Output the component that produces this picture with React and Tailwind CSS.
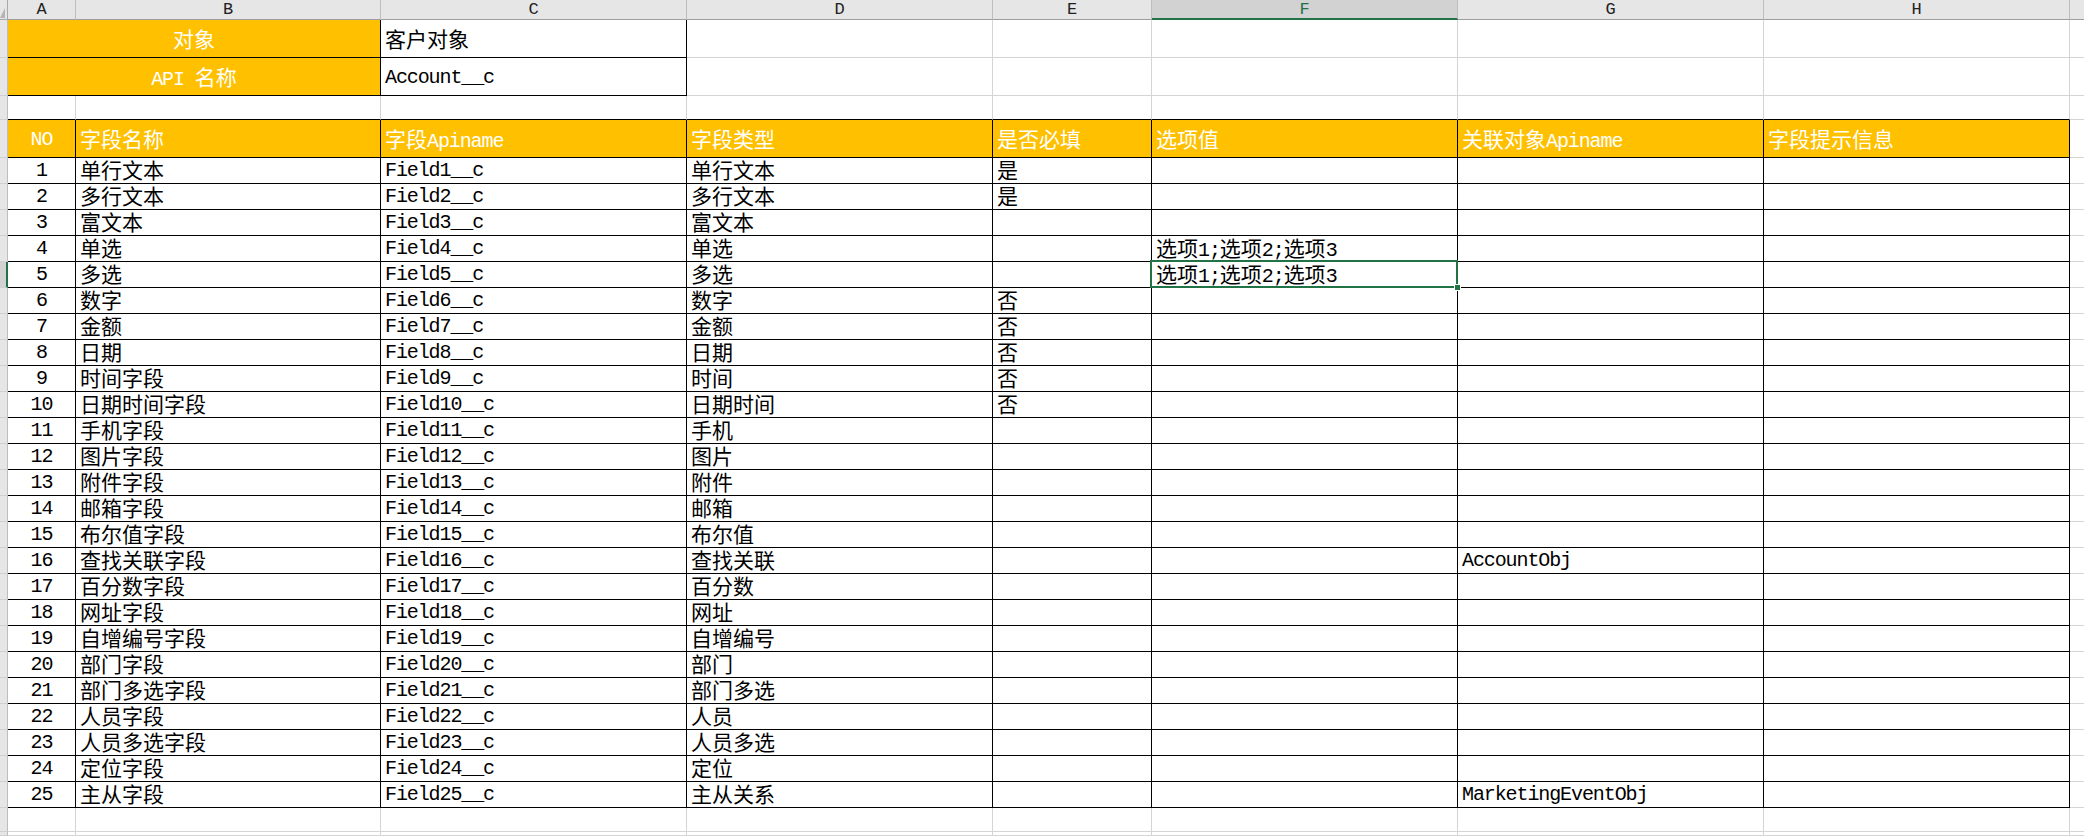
import React from "react";

const LAT = "font-['Liberation_Mono',monospace] text-[20px] tracking-[-1.1px]";
const CJK = "font-['Noto_Sans_CJK_SC',sans-serif] text-[21px]";
const HDR = "font-['Liberation_Mono',monospace] text-[17px] leading-[17px]";

const W = [
  "w-[68px]",
  "w-[305px]",
  "w-[306px]",
  "w-[306px]",
  "w-[159px]",
  "w-[306px]",
  "w-[306px]",
  "w-[306px]",
];
const LETTERS = ["A", "B", "C", "D", "E", "F", "G", "H"];

function Txt({ s }) {
  if (!s) return null;
  const parts = s.split(/([\u3400-\u9fff\uff01-\uff5e]+)/).filter((p) => p !== "");
  return (
    <span className="whitespace-pre leading-[22px]">
      {parts.map((p, i) =>
        /[\u3400-\u9fff\uff01-\uff5e]/.test(p) ? (
          <span key={i} className={CJK}>
            {p}
          </span>
        ) : (
          <span key={i} className={LAT}>
            {p}
          </span>
        )
      )}
    </span>
  );
}

function RowHead({ selected }) {
  return (
    <div
      className={
        "w-[8px] shrink-0 h-full border-b border-[#cfcfcf] " +
        (selected
          ? "bg-[#d2d2d2] border-r-2 border-r-[#217346]"
          : "bg-[#e6e6e6] border-r border-r-[#bdbdbd]")
      }
    />
  );
}

const rows = [
  [1, "单行文本", "Field1__c", "单行文本", "是", "", ""],
  [2, "多行文本", "Field2__c", "多行文本", "是", "", ""],
  [3, "富文本", "Field3__c", "富文本", "", "", ""],
  [4, "单选", "Field4__c", "单选", "", "选项1;选项2;选项3", ""],
  [5, "多选", "Field5__c", "多选", "", "选项1;选项2;选项3", ""],
  [6, "数字", "Field6__c", "数字", "否", "", ""],
  [7, "金额", "Field7__c", "金额", "否", "", ""],
  [8, "日期", "Field8__c", "日期", "否", "", ""],
  [9, "时间字段", "Field9__c", "时间", "否", "", ""],
  [10, "日期时间字段", "Field10__c", "日期时间", "否", "", ""],
  [11, "手机字段", "Field11__c", "手机", "", "", ""],
  [12, "图片字段", "Field12__c", "图片", "", "", ""],
  [13, "附件字段", "Field13__c", "附件", "", "", ""],
  [14, "邮箱字段", "Field14__c", "邮箱", "", "", ""],
  [15, "布尔值字段", "Field15__c", "布尔值", "", "", ""],
  [16, "查找关联字段", "Field16__c", "查找关联", "", "", "AccountObj"],
  [17, "百分数字段", "Field17__c", "百分数", "", "", ""],
  [18, "网址字段", "Field18__c", "网址", "", "", ""],
  [19, "自增编号字段", "Field19__c", "自增编号", "", "", ""],
  [20, "部门字段", "Field20__c", "部门", "", "", ""],
  [21, "部门多选字段", "Field21__c", "部门多选", "", "", ""],
  [22, "人员字段", "Field22__c", "人员", "", "", ""],
  [23, "人员多选字段", "Field23__c", "人员多选", "", "", ""],
  [24, "定位字段", "Field24__c", "定位", "", "", ""],
  [25, "主从字段", "Field25__c", "主从关系", "", "", "MarketingEventObj"],
];

const headers = ["NO", "字段名称", "字段Apiname", "字段类型", "是否必填", "选项值", "关联对象Apiname", "字段提示信息"];

function GrayCell({ w, bottomBlack }) {
  return (
    <div
      className={
        w +
        " shrink-0 h-full bg-white border-r border-r-[#d4d4d4] border-b " +
        (bottomBlack ? "border-b-black" : "border-b-[#d4d4d4]")
      }
    />
  );
}

function Extra() {
  return <div className="flex-1 h-full bg-white border-b border-[#d4d4d4]" />;
}

export default function App() {
  return (
    <div className="w-[2084px] h-[836px] overflow-hidden bg-white text-black">
      {/* column letters */}
      <div className="flex h-[20px]">
        <div className="relative w-[8px] shrink-0 h-full bg-[#e6e6e6] border-r border-b border-[#a8a8a8]">
          <svg className="absolute left-0 top-[8px]" width="5" height="10" viewBox="0 0 5 10">
            <polygon points="5,0 5,10 0,10" fill="#b4b4b4" />
          </svg>
        </div>
        {LETTERS.map((l, i) => (
          <div
            key={l}
            className={
              W[i] +
              " shrink-0 h-full flex items-center justify-center border-r border-r-[#bdbdbd] " +
              (l === "F"
                ? "bg-[#d2d2d2] border-b-2 border-b-[#217346] text-[#217346]"
                : "bg-[#e6e6e6] border-b border-b-[#9e9e9e] text-[#222]")
            }
          >
            <span className={HDR}>{l}</span>
          </div>
        ))}
        <div className="flex-1 h-full bg-[#e6e6e6] border-b border-[#9e9e9e]" />
      </div>

      {/* row 1 & 2 */}
      {[
        ["对象", "客户对象"],
        ["API 名称", "Account__c"],
      ].map(([k, v]) => (
        <div key={k} className="flex h-[38px]">
          <RowHead />
          <div className="w-[373px] shrink-0 h-full bg-[#ffc000] text-white flex items-center justify-center pt-[2px] border-r border-b border-black">
            <Txt s={k} />
          </div>
          <div className="w-[306px] shrink-0 h-full bg-white flex items-center pl-[4px] pt-[2px] border-r border-b border-black">
            <Txt s={v} />
          </div>
          {[3, 4, 5, 6, 7].map((i) => (
            <GrayCell key={i} w={W[i]} />
          ))}
          <Extra />
        </div>
      ))}

      {/* row 3 empty */}
      <div className="flex h-[24px]">
        <RowHead />
        {W.map((w, i) => (
          <GrayCell key={i} w={w} bottomBlack />
        ))}
        <Extra />
      </div>

      {/* header row */}
      <div className="flex h-[38px]">
        <RowHead />
        {headers.map((h, i) => (
          <div
            key={h}
            className={
              W[i] +
              " shrink-0 h-full bg-[#ffc000] text-white flex items-center pt-[2px] border-r border-b border-black " +
              (i === 0 ? "justify-center" : "pl-[4px]")
            }
          >
            <Txt s={h} />
          </div>
        ))}
        <Extra />
      </div>

      {/* data rows */}
      {rows.map((r) => (
        <div key={r[0]} className="flex h-[26px]">
          <RowHead selected={r[0] === 5} />
          {[String(r[0]), r[1], r[2], r[3], r[4], r[5], r[6], ""].map((c, i) => (
            <div
              key={i}
              className={
                W[i] +
                " relative shrink-0 h-full bg-white flex items-center border-r border-b border-black " +
                (i === 0 ? "justify-center" : "pl-[4px]")
              }
            >
              <Txt s={c} />
              {r[0] === 5 && i === 5 ? (
                <>
                  <div className="absolute z-10 -left-[2px] -top-[2px] -right-[1px] -bottom-[1px] border-2 border-[#217346]" />
                  <div className="absolute z-20 -right-[4px] -bottom-[4px] w-[7px] h-[7px] bg-[#217346] border border-white" />
                </>
              ) : null}
            </div>
          ))}
          <Extra />
        </div>
      ))}

      {/* trailing empty rows */}
      <div className="flex h-[24px]">
        <RowHead />
        {W.map((w, i) => (
          <GrayCell key={i} w={w} />
        ))}
        <Extra />
      </div>
      <div className="flex h-[4px]">
        <RowHead />
        {W.map((w, i) => (
          <GrayCell key={i} w={w} />
        ))}
        <Extra />
      </div>
    </div>
  );
}
